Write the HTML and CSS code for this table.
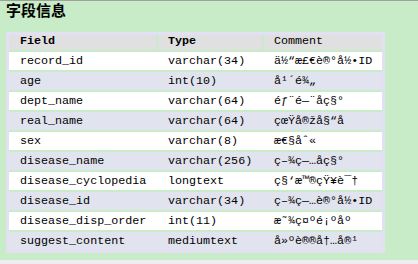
FILE: index.html
```html
<!DOCTYPE html>
<html>
<head>
<meta charset="utf-8">
<link rel="stylesheet" href="styles.css">
</head>
<body>
<div class="panel">
  <h2 class="title">字段信息</h2>
  <table class="fields">
    <thead>
      <tr><th class="c1 strong">Field</th><th class="c2 strong">Type</th><th class="c3">Comment</th></tr>
    </thead>
    <tbody>
      <tr><td>record_id</td><td>varchar(34)</td><td>ä½“æ£€è®°å½•ID</td></tr>
      <tr class="alt"><td>age</td><td>int(10)</td><td>å¹´é¾„</td></tr>
      <tr><td>dept_name</td><td>varchar(64)</td><td>éƒ¨é—¨åç§°</td></tr>
      <tr class="alt"><td>real_name</td><td>varchar(64)</td><td>çœŸå®žå§“å</td></tr>
      <tr><td>sex</td><td>varchar(8)</td><td>æ€§åˆ«</td></tr>
      <tr class="alt"><td>disease_name</td><td>varchar(256)</td><td>ç–¾ç—…åç§°</td></tr>
      <tr><td>disease_cyclopedia</td><td>longtext</td><td>ç§‘æ™®çŸ¥è¯†</td></tr>
      <tr class="alt"><td>disease_id</td><td>varchar(34)</td><td>ç–¾ç—…è®°å½•ID</td></tr>
      <tr><td>disease_disp_order</td><td>int(11)</td><td>æ˜¾ç¤ºé¡ºåº</td></tr>
      <tr class="alt"><td>suggest_content</td><td>mediumtext</td><td>å»ºè®®å†…å®¹</td></tr>
    </tbody>
  </table>
</div>
</body>
</html>
```
FILE: styles.css
```css
html, body {
  margin: 0;
  background: #eeeeee;
}
body {
  font-family: "Liberation Mono", "DejaVu Sans Mono", monospace;
  color: #000;
}
.panel {
  background: #c8ecc8;
  border-top: 1px solid #a0a0a0;
  padding: 0 6px 7px;
}
.title {
  margin: 0;
  font-family: "Noto Sans CJK SC", sans-serif;
  font-weight: bold;
  font-size: 15px;
  line-height: 18px;
  color: #000;
}
.fields {
  margin-top: 13px;
  border-collapse: separate;
  border-spacing: 0;
  border: 3px solid #e4e0f4;
  table-layout: fixed;
  width: 379px;
  box-sizing: border-box;
  font-size: 11.7px;
}
.fields th {
  box-sizing: border-box;
  background: #e0e0e0;
  text-align: left;
  font-weight: normal;
  line-height: 13px;
  padding: 0 0 2px 10px;
  white-space: nowrap;
}
.fields th.strong {
  font-weight: bold;
}
.fields th.c1 {
  width: 147px;
  padding-left: 11px;
}
.fields th.c2 {
  width: 106px;
  border-left: 2px solid #c8ecc8;
}
.fields th.c3 {
  width: 120px;
  border-left: 2px solid #c8ecc8;
}
.fields td {
  background: #ffffff;
  border-top: 2px solid #c8ecc8;
  line-height: 18px;
  padding: 0 0 0 12px;
  white-space: nowrap;
  overflow: hidden;
}
.fields td:first-child {
  padding-left: 11px;
}
.fields tr.alt td {
  background: #e1e3ee;
}
```
